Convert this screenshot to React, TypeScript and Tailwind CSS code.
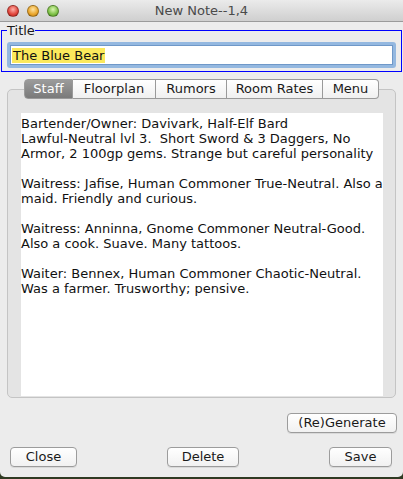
import React from "react";

const font = { fontFamily: '"DejaVu Sans", "Liberation Sans", sans-serif' };

const tabs = ["Staff", "Floorplan", "Rumors", "Room Rates", "Menu"];

const lines = [
  "Bartender/Owner: Davivark, Half-Elf Bard",
  "Lawful-Neutral lvl 3.  Short Sword & 3 Daggers, No",
  "Armor, 2 100gp gems. Strange but careful personality",
  "",
  "Waitress: Jafise, Human Commoner True-Neutral. Also a",
  "maid. Friendly and curious.",
  "",
  "Waitress: Anninna, Gnome Commoner Neutral-Good.",
  "Also a cook. Suave. Many tattoos.",
  "",
  "Waiter: Bennex, Human Commoner Chaotic-Neutral.",
  "Was a farmer. Trusworthy; pensive.",
];

function Light({ color }: { color: string }) {
  return (
    <span
      className="block w-[12px] h-[12px] rounded-full border border-black/30"
      style={{ background: color }}
    />
  );
}

function Button({ label, className }: { label: string; className: string }) {
  return (
    <button
      className={`h-[20px] rounded-[4px] border border-[#9c9c9c] bg-gradient-to-b from-white to-[#f1f1f1] text-[13px] leading-[18px] text-[#1a1a1a] shadow-[0_1px_0_rgba(0,0,0,0.08)] ${className}`}
    >
      {label}
    </button>
  );
}

export default function App() {
  return (
    <div className="w-[403px] h-[479px] bg-[#2f3a22] overflow-hidden" style={font}>
      <div className="h-[477px] bg-[#ececec] rounded-b-[5px] flex flex-col">
        {/* title bar */}
        <div className="h-[22px] flex items-center relative bg-gradient-to-b from-[#ebebeb] to-[#cfcfcf] border-b border-[#9a9a9a]">
          <div className="flex gap-[8px] pl-[7px]">
            <Light color="radial-gradient(circle at 50% 35%, #ffb0a8, #e0443a 60%, #b3241c)" />
            <Light color="radial-gradient(circle at 50% 35%, #ffe3a0, #e9a52a 60%, #b9770f)" />
            <Light color="radial-gradient(circle at 50% 35%, #d9f5b0, #7cc045 60%, #4e8f22)" />
          </div>
          <div className="absolute inset-0 flex items-center justify-center text-[13px] text-[#4a4a4a]">
            New Note--1,4
          </div>
        </div>

        {/* title field */}
        <fieldset className="mx-[1px] mt-[1px] border border-[#0000ff] px-[5px] pb-[3px]">
          <legend className="text-[13px] leading-[15px] text-[#1a1a1a] px-0">Title</legend>
          <div className="mt-[4px] rounded-[3px] p-[3px] bg-[#94b8e0]">
            <div className="h-[20px] bg-white border border-[#6f98c8] flex items-center pl-[1px]">
              <span className="bg-[#fbe95c] text-[13px] leading-[15px] text-[#111] px-[1px]">The Blue Bear</span>
            </div>
          </div>
        </fieldset>

        {/* tabs */}
        <div className="mx-[7px] mt-[7px] flex flex-col">
          <div className="flex justify-center relative z-10 -mb-[10px]">
            {tabs.map((t, i) => {
              const sel = i === 0;
              const first = i === 0;
              const last = i === tabs.length - 1;
              return (
                <div
                  key={t}
                  className={`h-[20px] flex items-center justify-center text-[13px] border-y border-[#9a9a9a] ${
                    first ? "w-[49px] rounded-l-[4px] border-l" : ""
                  } ${last ? "w-[56px] rounded-r-[4px] border-r" : "border-r"} ${
                    t === "Floorplan" ? "w-[83px]" : ""
                  } ${t === "Rumors" ? "w-[71px]" : ""} ${t === "Room Rates" ? "w-[96px]" : ""} ${
                    sel
                      ? "bg-gradient-to-b from-[#9b9b9b] to-[#7a7a7a] text-white border-[#6d6d6d]"
                      : "bg-gradient-to-b from-white to-[#f0f0f0] text-[#1a1a1a]"
                  }`}
                >
                  {t}
                </div>
              );
            })}
          </div>
          <div className="h-[309px] rounded-[5px] border border-[#c4c4c4] bg-[#e4e4e4] pt-[23px] px-[13px] pb-[1px] flex">
            <div className="flex-1 bg-white pt-[3px] text-[13px] leading-[15px] text-[#111]">
              {lines.map((l, i) => (
                <div key={i} className="h-[15px] whitespace-pre">
                  {l}
                </div>
              ))}
            </div>
          </div>
        </div>

        <div className="flex justify-end pr-[6px] mt-[15px]">
          <Button label="(Re)Generate" className="w-[110px]" />
        </div>
        <div className="flex justify-between px-[10px] pr-[11px] mt-[14px]">
          <Button label="Close" className="w-[67px]" />
          <Button label="Delete" className="w-[72px]" />
          <Button label="Save" className="w-[63px]" />
        </div>
      </div>
    </div>
  );
}
